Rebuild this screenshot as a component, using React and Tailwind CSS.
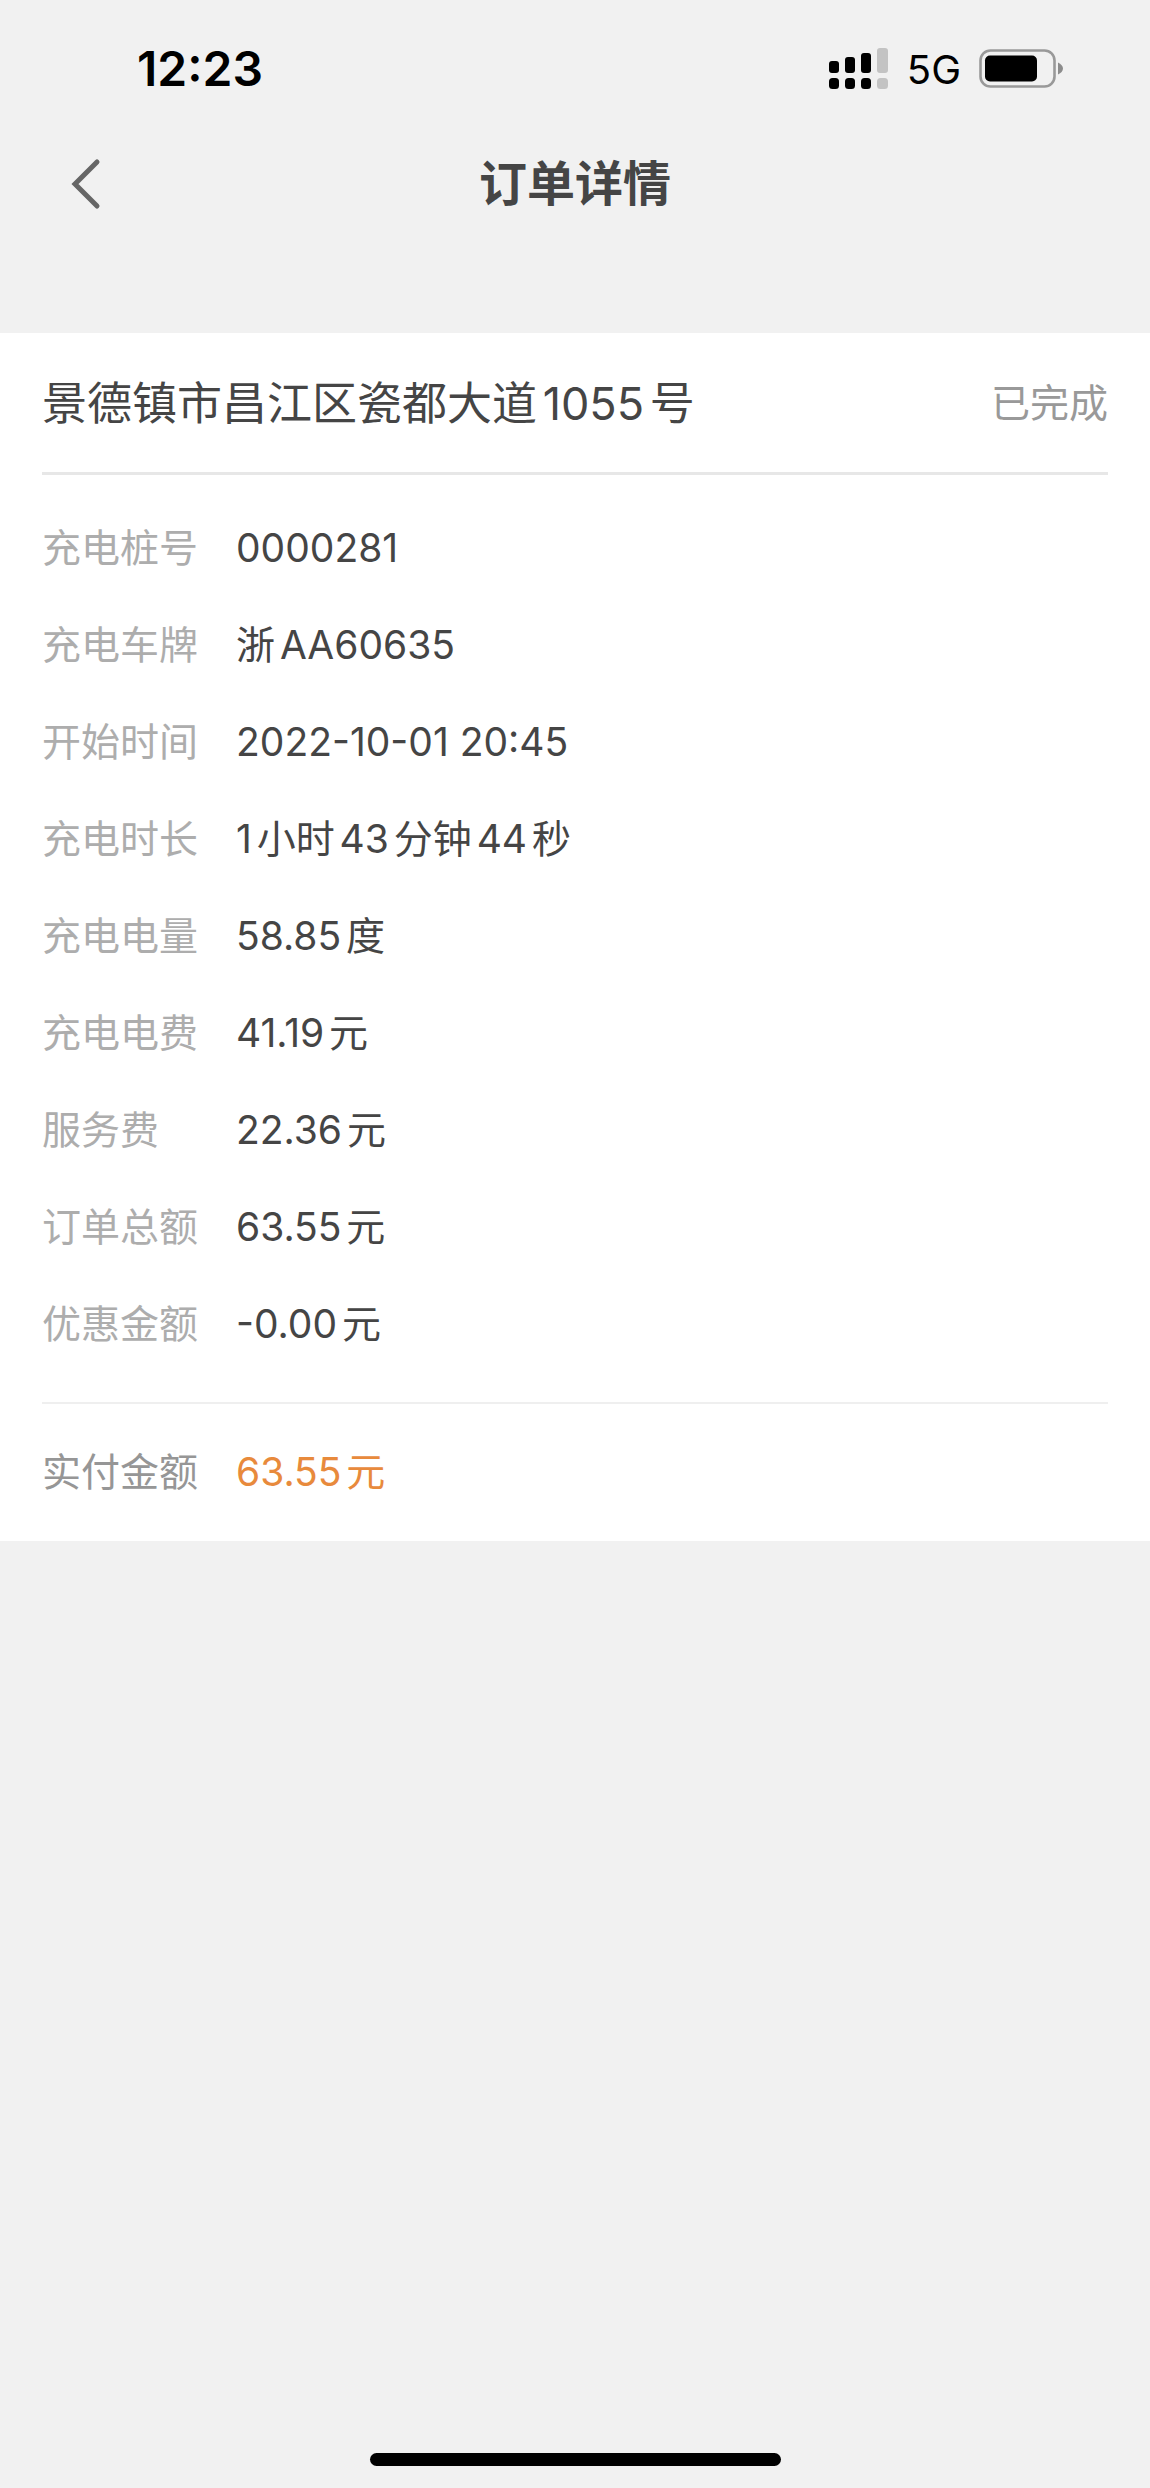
import React from 'react';

const order = {
  address: '景德镇市昌江区瓷都大道1055号',
  status: '已完成',
  fields: [
    { label: '充电桩号', value: '0000281' },
    { label: '充电车牌', value: '浙AA60635' },
    { label: '开始时间', value: '2022-10-01 20:45' },
    { label: '充电时长', value: '1小时43分钟44秒' },
    { label: '充电电量', value: '58.85度' },
    { label: '充电电费', value: '41.19元' },
    { label: '服务费', value: '22.36元' },
    { label: '订单总额', value: '63.55元' },
    { label: '优惠金额', value: '-0.00元' },
  ],
  paid: { label: '实付金额', value: '63.55元' },
};

export default function App() {
  return (
    <div className="min-h-screen flex flex-col bg-[#f1f1f1] text-[#454545] font-[Inter,'Noto_Sans_CJK_SC',sans-serif] [text-autospace:normal]">
      <StatusBar />
      <NavBar title="订单详情" />

      <main className="mt-[93px] px-[42px] bg-white">
        <div className="h-[142px] pt-[2px] flex items-center justify-between border-b-3 border-[#e7e7e7]">
          <h2 className="text-[45px]">{order.address}</h2>
          <span className="text-[39px] text-[#999999]">{order.status}</span>
        </div>

        <dl className="pt-[25px] pb-[29px] border-b-2 border-[#efefef]">
          {order.fields.map((field) => (
            <div key={field.label} className="h-[97px] flex items-center text-[39px]">
              <dt className="w-[194px] text-[#adadad]">{field.label}</dt>
              <dd>{field.value}</dd>
            </div>
          ))}
        </dl>

        <dl className="h-[137px] flex items-center text-[39px]">
          <dt className="w-[194px] text-[#969696]">{order.paid.label}</dt>
          <dd className="text-[#e88a3c]">{order.paid.value}</dd>
        </dl>
      </main>

      <div className="mt-auto mb-[22px] mx-auto w-[411px] h-[13px] rounded-full bg-black" />
    </div>
  );
}

function StatusBar() {
  return (
    <div className="h-[138px] pl-[137px] pr-[86px] flex items-center justify-between text-black">
      <span className="text-[48px] font-semibold">12:23</span>
      <div className="flex items-center">
        <SignalIcon />
        <span className="mx-[18px] pt-[2px] text-[40px]">5G</span>
        <BatteryIcon />
      </div>
    </div>
  );
}

function NavBar({ title }) {
  return (
    <header className="h-[102px] px-[58px] grid grid-cols-[1fr_auto_1fr] items-center pb-[10px]">
      <button type="button" aria-label="返回" className="w-14 h-16 flex items-center pl-3 cursor-pointer">
        <svg width="32" height="52" viewBox="0 0 32 52" fill="none" stroke="#666666" strokeWidth="5" strokeLinecap="round" strokeLinejoin="miter">
          <path d="M27 4L5 26L27 48" />
        </svg>
      </button>
      <h1 className="text-[48px] font-bold">{title}</h1>
    </header>
  );
}

function SignalIcon() {
  return (
    <svg width="60" height="42" viewBox="0 0 60 42">
      <rect x="0" y="13" width="10" height="12" rx="3" />
      <rect x="16" y="9" width="10" height="16" rx="3" />
      <rect x="32" y="5" width="10" height="20" rx="3" />
      <rect x="48" y="0" width="11" height="25" rx="3" fill="#c3c3c3" />
      <rect x="0" y="30" width="10" height="11" rx="3.5" />
      <rect x="16" y="30" width="10" height="11" rx="3.5" />
      <rect x="32" y="30" width="10" height="11" rx="3.5" />
      <rect x="48" y="30" width="11" height="11" rx="3.5" fill="#c3c3c3" />
    </svg>
  );
}

function BatteryIcon() {
  return (
    <svg width="85" height="40" viewBox="0 0 85 40">
      <rect x="1.5" y="1.5" width="74" height="36" rx="10" fill="none" stroke="#999999" strokeWidth="2.6" />
      <rect x="6" y="6.5" width="52" height="26" rx="5" />
      <path d="M79 13.5C82 15 84 17 84 19.5C84 22 82 24 79 25.5Z" fill="#8c8c8c" />
    </svg>
  );
}
